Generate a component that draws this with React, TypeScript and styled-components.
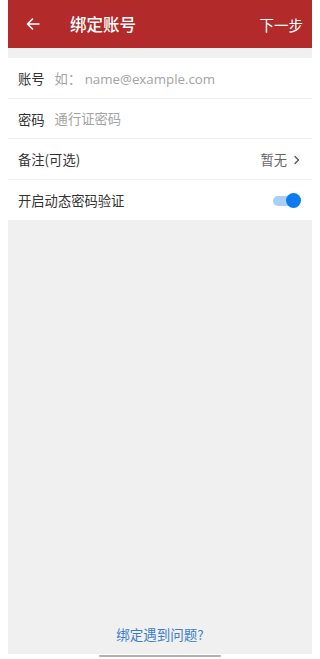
import React, { useState } from 'react';
import styled, { createGlobalStyle } from 'styled-components';

const GlobalStyle = createGlobalStyle`
  html, body {
    margin: 0;
    padding: 0;
    background: #ffffff;
  }
  body {
    font-family: "Noto Sans CJK SC", "Noto Sans", sans-serif;
  }
`;

const Screen = styled.div`
  box-sizing: border-box;
  width: 316px;
  height: 659px;
  padding: 0 4px 0 8px;
  display: flex;
  flex-direction: column;
  background: #ffffff;
`;

const Page = styled.div`
  flex: 1;
  display: flex;
  flex-direction: column;
  background: #f0f0f0;
`;

const Header = styled.header`
  height: 48px;
  flex-shrink: 0;
  background: #b22a29;
  color: #ffffff;
  display: flex;
  align-items: center;
  padding: 0 9px 0 18px;
`;

const BackButton = styled.button`
  width: 28px;
  height: 28px;
  padding: 0;
  border: none;
  background: none;
  color: #ffffff;
  display: flex;
  align-items: center;
  justify-content: flex-start;
  cursor: pointer;
`;

const Title = styled.h1`
  margin: 0 0 0 16px;
  font-size: 16.5px;
  font-weight: 500;
  flex: 1;
`;

const NextButton = styled.button`
  border: none;
  background: none;
  color: #ffffff;
  font-family: inherit;
  font-size: 14.5px;
  padding: 0;
  cursor: pointer;
`;

const List = styled.div`
  margin-top: 10px;
  background: #ffffff;
  display: flex;
  flex-direction: column;
`;

const Row = styled.div<{ $last?: boolean }>`
  height: 40.5px;
  display: flex;
  align-items: center;
  padding: 2px 11px 0 10px;
  border-bottom: ${(p) => (p.$last ? 'none' : '1px solid #f0f0f0')};
  box-sizing: border-box;
`;

const Label = styled.span`
  font-size: 13.3px;
  color: #333333;
`;

const Field = styled.input`
  flex: 1;
  min-width: 0;
  margin-left: 10px;
  border: none;
  outline: none;
  padding: 0;
  background: none;
  font-family: "Open Sans", "Noto Sans CJK SC", sans-serif;
  font-size: 13.3px;
  color: #333333;
  &::placeholder {
    color: #a3a3a3;
    opacity: 1;
  }
`;

const Spacer = styled.div`
  flex: 1;
`;

const Value = styled.span`
  font-size: 13.3px;
  color: #666666;
  display: flex;
  align-items: center;
  gap: 6px;
`;

const Toggle = styled.button<{ $on: boolean }>`
  position: relative;
  width: 28px;
  height: 18px;
  border: none;
  padding: 0;
  background: none;
  cursor: pointer;
  &::before {
    content: '';
    position: absolute;
    left: 0;
    width: 24px;
    top: 4px;
    height: 10px;
    border-radius: 5px;
    background: ${(p) => (p.$on ? '#a9cff5' : '#d5d5d5')};
  }
  &::after {
    content: '';
    position: absolute;
    top: 1.5px;
    left: ${(p) => (p.$on ? '13px' : '0')};
    width: 15px;
    height: 15px;
    border-radius: 50%;
    background: ${(p) => (p.$on ? '#0b7bef' : '#fafafa')};
  }
`;

const Footer = styled.div`
  margin-top: auto;
  padding-bottom: 9px;
  text-align: center;
`;

const HelpLink = styled.a`
  font-size: 13.5px;
  color: #3b7ec8;
  text-decoration: none;
`;

const HomeBar = styled.div`
  height: 5px;
  flex-shrink: 0;
  display: flex;
  justify-content: center;
  align-items: flex-start;
`;

const HomeIndicator = styled.div`
  width: 122px;
  height: 2px;
  margin-top: 1px;
  border-radius: 1px;
  background: #b0b0b0;
`;

function App() {
  const [account, setAccount] = useState('');
  const [password, setPassword] = useState('');
  const [dynamic, setDynamic] = useState(true);

  return (
    <>
      <GlobalStyle />
      <Screen>
        <Page>
          <Header>
            <BackButton aria-label="返回">
              <svg width="14" height="14" viewBox="0 0 14 14" fill="none">
                <path
                  d="M13 7H1.5M6.5 2L1.5 7l5 5"
                  stroke="#fff"
                  strokeWidth="1.6"
                  strokeLinecap="round"
                  strokeLinejoin="round"
                />
              </svg>
            </BackButton>
            <Title>绑定账号</Title>
            <NextButton>下一步</NextButton>
          </Header>

          <List>
            <Row>
              <Label>账号</Label>
              <Field
                placeholder="如： name@example.com"
                value={account}
                onChange={(e) => setAccount(e.target.value)}
              />
            </Row>
            <Row>
              <Label>密码</Label>
              <Field
                type="password"
                placeholder="通行证密码"
                value={password}
                onChange={(e) => setPassword(e.target.value)}
              />
            </Row>
            <Row>
              <Label>备注(可选)</Label>
              <Spacer />
              <Value>
                暂无
                <svg width="8" height="10" viewBox="0 0 8 10" fill="none">
                  <path d="M2 1.5L5.5 5 2 8.5" stroke="#555" strokeWidth="1.3" strokeLinecap="round" strokeLinejoin="round" />
                </svg>
              </Value>
            </Row>
            <Row $last>
              <Label>开启动态密码验证</Label>
              <Spacer />
              <Toggle $on={dynamic} onClick={() => setDynamic(!dynamic)} aria-label="开启动态密码验证" />
            </Row>
          </List>

          <Footer>
            <HelpLink href="#">绑定遇到问题?</HelpLink>
          </Footer>
        </Page>
        <HomeBar>
          <HomeIndicator />
        </HomeBar>
      </Screen>
    </>
  );
}

export default App;
